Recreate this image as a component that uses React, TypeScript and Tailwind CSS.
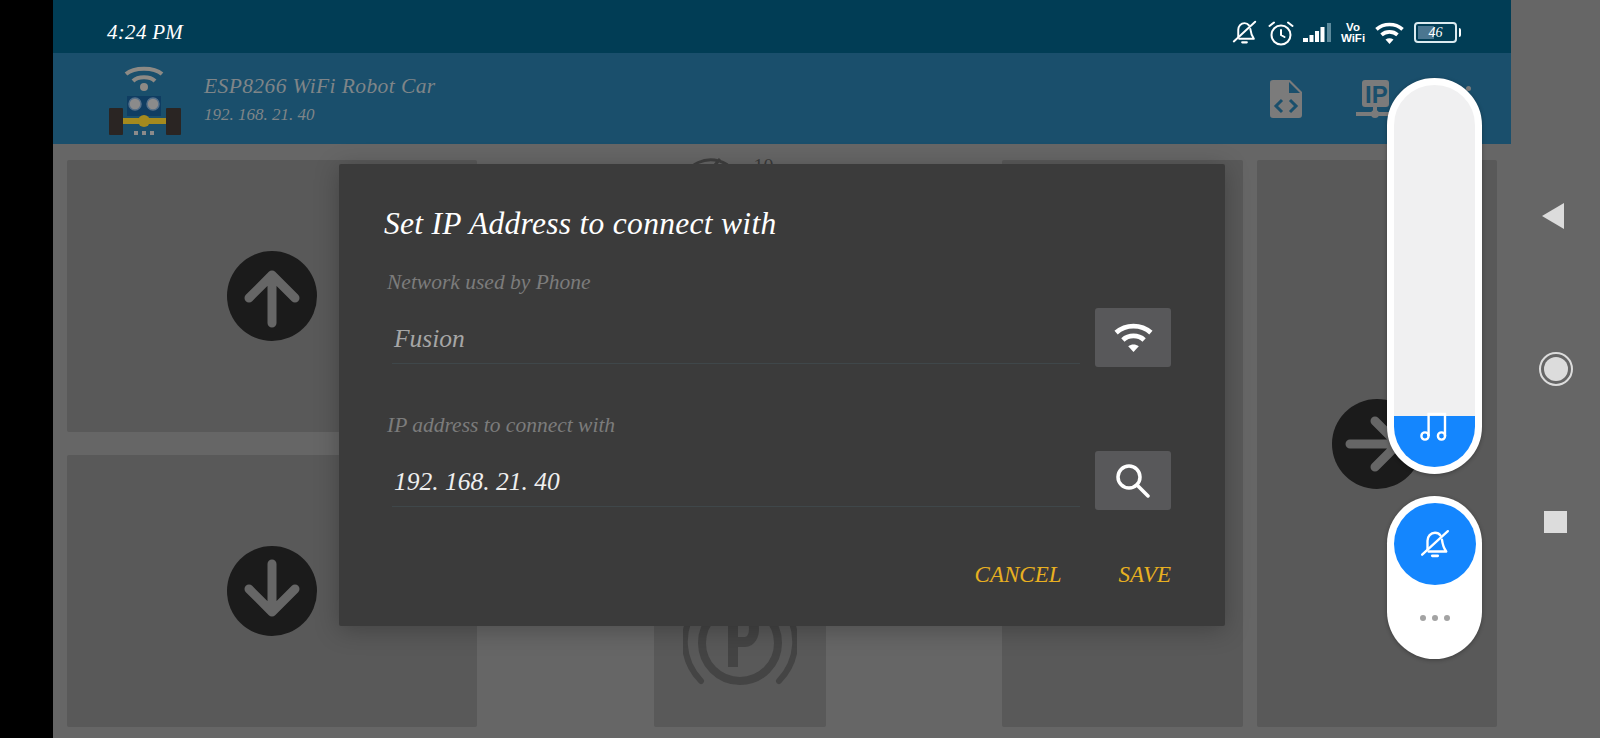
/* ── Icons ── */

function ArrowCircle({ rotate }: { rotate: string }) {
  return (
    <div className="flex h-[90px] w-[90px] items-center justify-center rounded-full bg-[#1b1b1b]">
      <svg width="90" height="90" viewBox="0 0 90 90" className={rotate} fill="none" stroke="#666666" strokeWidth="9" strokeLinecap="round" strokeLinejoin="round">
        <path d="M45 72V24M22 47L45 24L68 47" />
      </svg>
    </div>
  );
}

function WifiGlyph({ className, color }: { className: string; color: string }) {
  return (
    <svg viewBox="0 0 40 30" className={className} fill="none" stroke={color} strokeWidth="5">
      <path d="M2 10C12 1 28 1 38 10" />
      <path d="M9 17.500C15 12 25 12 31 17.500" />
      <path d="M14.500 24L20 30L25.500 24C22 21.500 18 21.500 14.500 24Z" fill={color} stroke="none" />
    </svg>
  );
}

function SearchGlyph() {
  return (
    <svg width="34" height="34" viewBox="0 0 34 34" fill="none" stroke="white" strokeWidth="3.500" strokeLinecap="round">
      <circle cx="13" cy="13" r="11" />
      <path d="M21 21L32 32" />
    </svg>
  );
}

function RobotLogo() {
  return (
    <svg width="74" height="72" viewBox="0 0 74 72" className="mt-[6px] shrink-0">
      <g fill="none" stroke="#8d8a85" strokeWidth="4">
        <path d="M18 8C26 1 46 1 54 8" />
        <path d="M25 15C30 10 42 10 47 15" />
      </g>
      <circle cx="36" cy="21" r="4" fill="#8d8a85" />
      <rect x="19" y="30" width="34" height="20" fill="#0f3d62" />
      <circle cx="27" cy="38" r="6" fill="#8b8b8b" stroke="#55708a" strokeWidth="1.5" />
      <circle cx="45" cy="38" r="6" fill="#8b8b8b" stroke="#55708a" strokeWidth="1.5" />
      <rect x="1" y="42" width="14" height="27" rx="1" fill="#2a2523" />
      <rect x="58" y="42" width="15" height="27" rx="1" fill="#2a2523" />
      <rect x="15" y="52" width="43" height="6" fill="#a48a1e" />
      <circle cx="36" cy="55" r="6" fill="#a48a1e" />
      <g fill="#8b8b8b">
        <rect x="26" y="65" width="4" height="4" />
        <rect x="34" y="65" width="4" height="4" />
        <rect x="42" y="65" width="4" height="4" />
      </g>
    </svg>
  );
}

function BellSlash({ size }: { size: number }) {
  return (
    <svg width={size} height={size} viewBox="0 0 28 28" fill="none" stroke="white" strokeWidth="2.200" strokeLinecap="round" strokeLinejoin="round">
      <path d="M7 19V11C7 7 10 3.500 14 3.500C16 3.500 18 4.500 19 6" />
      <path d="M20.500 10C21 14 21.500 17 24.500 21H8" />
      <path d="M2 24L26 2" />
      <path d="M11.500 25H16.500" strokeWidth="2.600" />
    </svg>
  );
}

/* ── Status bar ── */

function StatusIcons() {
  return (
    <div className="flex items-center text-white">
      <div className="mr-[11px]"><BellSlash size={25} /></div>
      <svg width="26" height="26" viewBox="0 0 26 26" fill="none" stroke="white" strokeWidth="2" strokeLinecap="round" className="mr-[9px]">
        <circle cx="13" cy="15" r="9.500" />
        <path d="M13 10V15L16.500 17M1.500 6L6 2.500M24.500 6L20 2.500" />
      </svg>
      <svg width="29" height="21" viewBox="0 0 29 21" fill="white" className="mr-[8px]">
        <rect x="0" y="16" width="5" height="4" />
        <rect x="6.500" y="13" width="4" height="7" />
        <rect x="12" y="9" width="4" height="11" />
        <rect x="17.500" y="5" width="4" height="15" />
        <rect x="24" y="1" width="4" height="19" fill="#5c8a9c" />
      </svg>
      <div className="mr-[9px] flex w-[26px] flex-col items-center font-['Liberation_Sans'] text-[11.5px] font-bold not-italic leading-[11px] text-white">
        <span>Vo</span>
        <span>WiFi</span>
      </div>
      <WifiGlyph className="mr-[10px] h-[22px] w-[29px]" color="white" />
      <div className="flex h-[21px] w-[43px] items-center rounded-[4px] border-[2.500px] border-[#dcebf0] p-[2px]">
        <div className="relative flex h-full w-full items-center justify-center">
          <div className="absolute inset-y-0 left-0 w-[46%] bg-[#4b7690]" />
          <span className="relative text-[14px] leading-none text-white">46</span>
        </div>
      </div>
      <div className="ml-[2px] h-[9px] w-[2px] rounded-r bg-white" />
    </div>
  );
}

/* ── Dialog ── */

function Field({ label, value, valueColor, button }: { label: string; value: string; valueColor: string; button: React.ReactNode }) {
  return (
    <div>
      <div className="h-[28px] pl-[3px] text-[21.500px] leading-[28px] text-[#7c7c7c]">{label}</div>
      <div className="mt-[12px] flex items-start gap-[15px]">
        <div className={`ml-[8px] h-[56px] flex-1 border-b border-b-[#3f474a] pl-[2px] pt-[13px] text-[25.500px] leading-[36px] ${valueColor}`}>
          {value}
        </div>
        <div className="flex h-[59px] w-[76px] items-center justify-center rounded-[3px] bg-[#58585a]">{button}</div>
      </div>
    </div>
  );
}

function IpDialog() {
  return (
    <div className="absolute left-[339px] top-[164px] flex h-[462px] w-[886px] flex-col rounded-[2px] bg-[#3b3b3b] pl-[45px] pr-[54px] shadow-[0_4px_24px_rgba(0,0,0,0.25)]">
      <div className="mt-[35px] h-[50px] text-[31.500px] leading-[50px] tracking-[0.3px] text-white">Set IP Address to connect with</div>
      <div className="mt-[19px]">
        <Field label="Network used by Phone" value="Fusion" valueColor="text-[#a6a6a6]" button={<WifiGlyph className="h-[29px] w-[41px]" color="white" />} />
      </div>
      <div className="mt-[44px]">
        <Field label="IP address to connect with" value="192. 168. 21. 40" valueColor="text-[#efefef]" button={<SearchGlyph />} />
      </div>
      <div className="mt-[48px] flex justify-end gap-[57px] text-[23px] leading-[34px] text-[#e8b021]">
        <span>CANCEL</span>
        <span>SAVE</span>
      </div>
    </div>
  );
}

/* ── Volume panel ── */

function VolumePanel() {
  return (
    <>
      <div className="absolute left-[1387px] top-[78px] flex h-[396px] w-[95px] flex-col justify-end overflow-hidden rounded-full border-[7px] border-white bg-[#f0f0f1] shadow-[0_1px_4px_rgba(0,0,0,0.3)]">
        <div className="relative h-[51px] bg-[#1486fe]">
          <svg width="28" height="30" viewBox="0 0 28 30" fill="none" stroke="white" strokeWidth="2.400" className="absolute left-[26px] top-[-4px]">
            <circle cx="5" cy="24" r="3.600" />
            <circle cx="21.500" cy="24" r="3.600" />
            <path d="M8.600 24V2H25V24" />
          </svg>
        </div>
      </div>
      <div className="absolute left-[1387px] top-[496px] flex h-[163px] w-[95px] flex-col items-center rounded-full bg-white pt-[7px] shadow-[0_1px_4px_rgba(0,0,0,0.3)]">
        <div className="flex h-[82px] w-[82px] items-center justify-center rounded-full bg-[#1486fe]">
          <BellSlash size={30} />
        </div>
        <div className="mt-[30px] flex gap-[6px]">
          <span className="h-[6px] w-[6px] rounded-full bg-[#a3a3a3]" />
          <span className="h-[6px] w-[6px] rounded-full bg-[#a3a3a3]" />
          <span className="h-[6px] w-[6px] rounded-full bg-[#a3a3a3]" />
        </div>
      </div>
    </>
  );
}

/* ── Main component ── */

export default function App() {
  return (
    <div className="relative flex h-[738px] w-[1600px] overflow-hidden bg-black font-['Liberation_Serif'] italic">
      <div className="w-[53px] shrink-0" />

      <div className="flex w-[1458px] shrink-0 flex-col">
        {/* Status bar */}
        <div className="flex h-[53px] items-center justify-between bg-[#013d55] pl-[54px] pr-[50px] pt-[12px]">
          <span className="text-[21px] tracking-[0.3px] text-white">4:24 PM</span>
          <StatusIcons />
        </div>

        {/* App bar */}
        <div className="flex h-[91px] items-center bg-[#1a4f6c] pl-[55px] pr-[40px]">
          <RobotLogo />
          <div className="ml-[22px]">
            <div className="text-[21.500px] leading-[32px] tracking-[0.4px] text-[#7f8588]">ESP8266 WiFi Robot Car</div>
            <div className="text-[17px] leading-[26px] text-[#7f8588]">192. 168. 21. 40</div>
          </div>
          <div className="ml-auto flex items-center">
            <svg width="32" height="38" viewBox="0 0 32 38">
              <path d="M3 0H20L32 12V35C32 37 31 38 29 38H3C1 38 0 37 0 35V3C0 1 1 0 3 0Z" fill="#7b7b7b" />
              <path d="M19 2L30 13H19Z" fill="#1a4f6c" />
              <path d="M12 20L6 26L12 32M20 20L26 26L20 32" fill="none" stroke="#1a4f6c" strokeWidth="3" />
            </svg>
            <svg width="46" height="40" viewBox="0 0 46 40" className="ml-[54px]">
              <rect x="6" y="1" width="27" height="27" rx="3" fill="#7b7b7b" />
              <text x="9" y="24" fontFamily="Liberation Sans" fontWeight="700" fontStyle="normal" fontSize="24" fill="#1a4f6c">IP</text>
              <path d="M19 28V33M0 35H38" stroke="#7b7b7b" strokeWidth="4" strokeLinecap="round" />
              <circle cx="19" cy="35" r="4" fill="#7b7b7b" />
            </svg>
            <div className="ml-[64px] flex flex-col gap-[5px]">
              <span className="h-[5px] w-[5px] rounded-full bg-[#7b7b7b]" />
              <span className="h-[5px] w-[5px] rounded-full bg-[#7b7b7b]" />
              <span className="h-[5px] w-[5px] rounded-full bg-[#7b7b7b]" />
            </div>
          </div>
        </div>

        {/* Controls */}
        <div className="flex flex-1 bg-[#666666] pb-[11px] pl-[14px] pr-[14px] pt-[16px]">
          <div className="flex w-[410px] flex-col gap-[23px]">
            <div className="flex flex-1 items-center justify-center rounded-[2px] bg-[#595959]">
              <ArrowCircle rotate="" />
            </div>
            <div className="flex flex-1 items-center justify-center rounded-[2px] bg-[#595959]">
              <ArrowCircle rotate="rotate-180" />
            </div>
          </div>

          <div className="flex flex-1 flex-col items-center justify-between">
            <div className="-mt-[5px] flex items-start gap-[14px] pr-[30px] text-[#3a3a3a]">
              <svg width="64" height="50" viewBox="0 0 64 50" fill="none" stroke="#3f3f3f" strokeWidth="3">
                <path d="M4 36C4 8 36 -4 54 12M44 4L34 16" />
              </svg>
              <span className="text-[20px] not-italic leading-[22px]">10</span>
            </div>
            <div className="flex h-[180px] w-[172px] items-end justify-center rounded-[2px] bg-[#595959] pb-[27px]">
              <svg width="114" height="114" viewBox="0 0 114 114" fill="none" stroke="#444444">
                <circle cx="57" cy="57" r="38" strokeWidth="8" />
                <path d="M15 18C-5 45 -1 75 18 95M99 18C119 45 115 75 96 95" strokeWidth="6" strokeLinecap="round" />
                <path d="M50 81V30H62C74 30 74 56 62 56H50" strokeWidth="10" />
              </svg>
            </div>
          </div>

          <div className="flex w-[241px] items-center justify-center rounded-[2px] bg-[#595959]">
            <ArrowCircle rotate="-rotate-90" />
          </div>
          <div className="ml-[14px] flex w-[240px] items-center justify-center rounded-[2px] bg-[#595959]">
            <ArrowCircle rotate="rotate-90" />
          </div>
        </div>
      </div>

      {/* Navigation bar */}
      <div className="relative flex flex-1 flex-col items-center bg-[#666666]">
        <div className="mr-[5px] mt-[203px] h-0 w-0 border-y-[13px] border-r-[22px] border-y-transparent border-r-[#dcdcdc]" />
        <div className="mt-[123px] flex h-[34px] w-[34px] items-center justify-center rounded-full border-[2.500px] border-[#dcdcdc]">
          <div className="h-[24px] w-[24px] rounded-full bg-[#dcdcdc]" />
        </div>
        <div className="mt-[125px] h-[22px] w-[23px] bg-[#dcdcdc]" />
      </div>

      <IpDialog />
      <VolumePanel />
    </div>
  );
}
